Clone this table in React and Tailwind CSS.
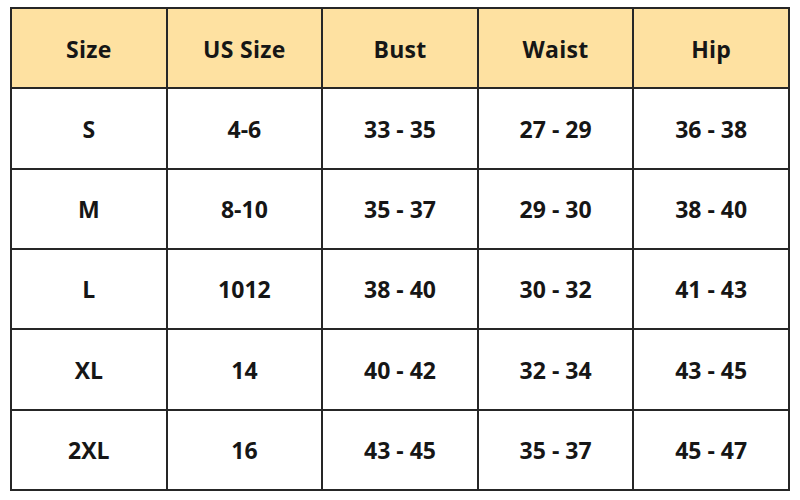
export default function App() {
  const head = ["Size", "US Size", "Bust", "Waist", "Hip"];
  const rows = [
    ["S", "4-6", "33 - 35", "27 - 29", "36 - 38"],
    ["M", "8-10", "35 - 37", "29 - 30", "38 - 40"],
    ["L", "1012", "38 - 40", "30 - 32", "41 - 43"],
    ["XL", "14", "40 - 42", "32 - 34", "43 - 45"],
    ["2XL", "16", "43 - 45", "35 - 37", "45 - 47"],
  ];
  return (
    <div className="w-[800px] h-[500px] bg-white pt-[7px] pl-[10px]" style={{ fontFamily: '"Open Sans", sans-serif' }}>
      <div className="w-[780px] h-[484px] bg-[#262626] p-[2px] grid grid-cols-5 grid-rows-6 gap-[2px]">
        {head.map((h) => (
          <div key={h} className="bg-[#fee1a1] flex items-center justify-center text-[23px] font-bold text-[#161616] tracking-[0.3px] pt-[2px]">
            {h}
          </div>
        ))}
        {rows.flat().map((c, i) => (
          <div key={i} className="bg-white flex items-center justify-center text-[23px] font-bold text-[#161616] pt-[1px]">
            {c}
          </div>
        ))}
      </div>
    </div>
  );
}
